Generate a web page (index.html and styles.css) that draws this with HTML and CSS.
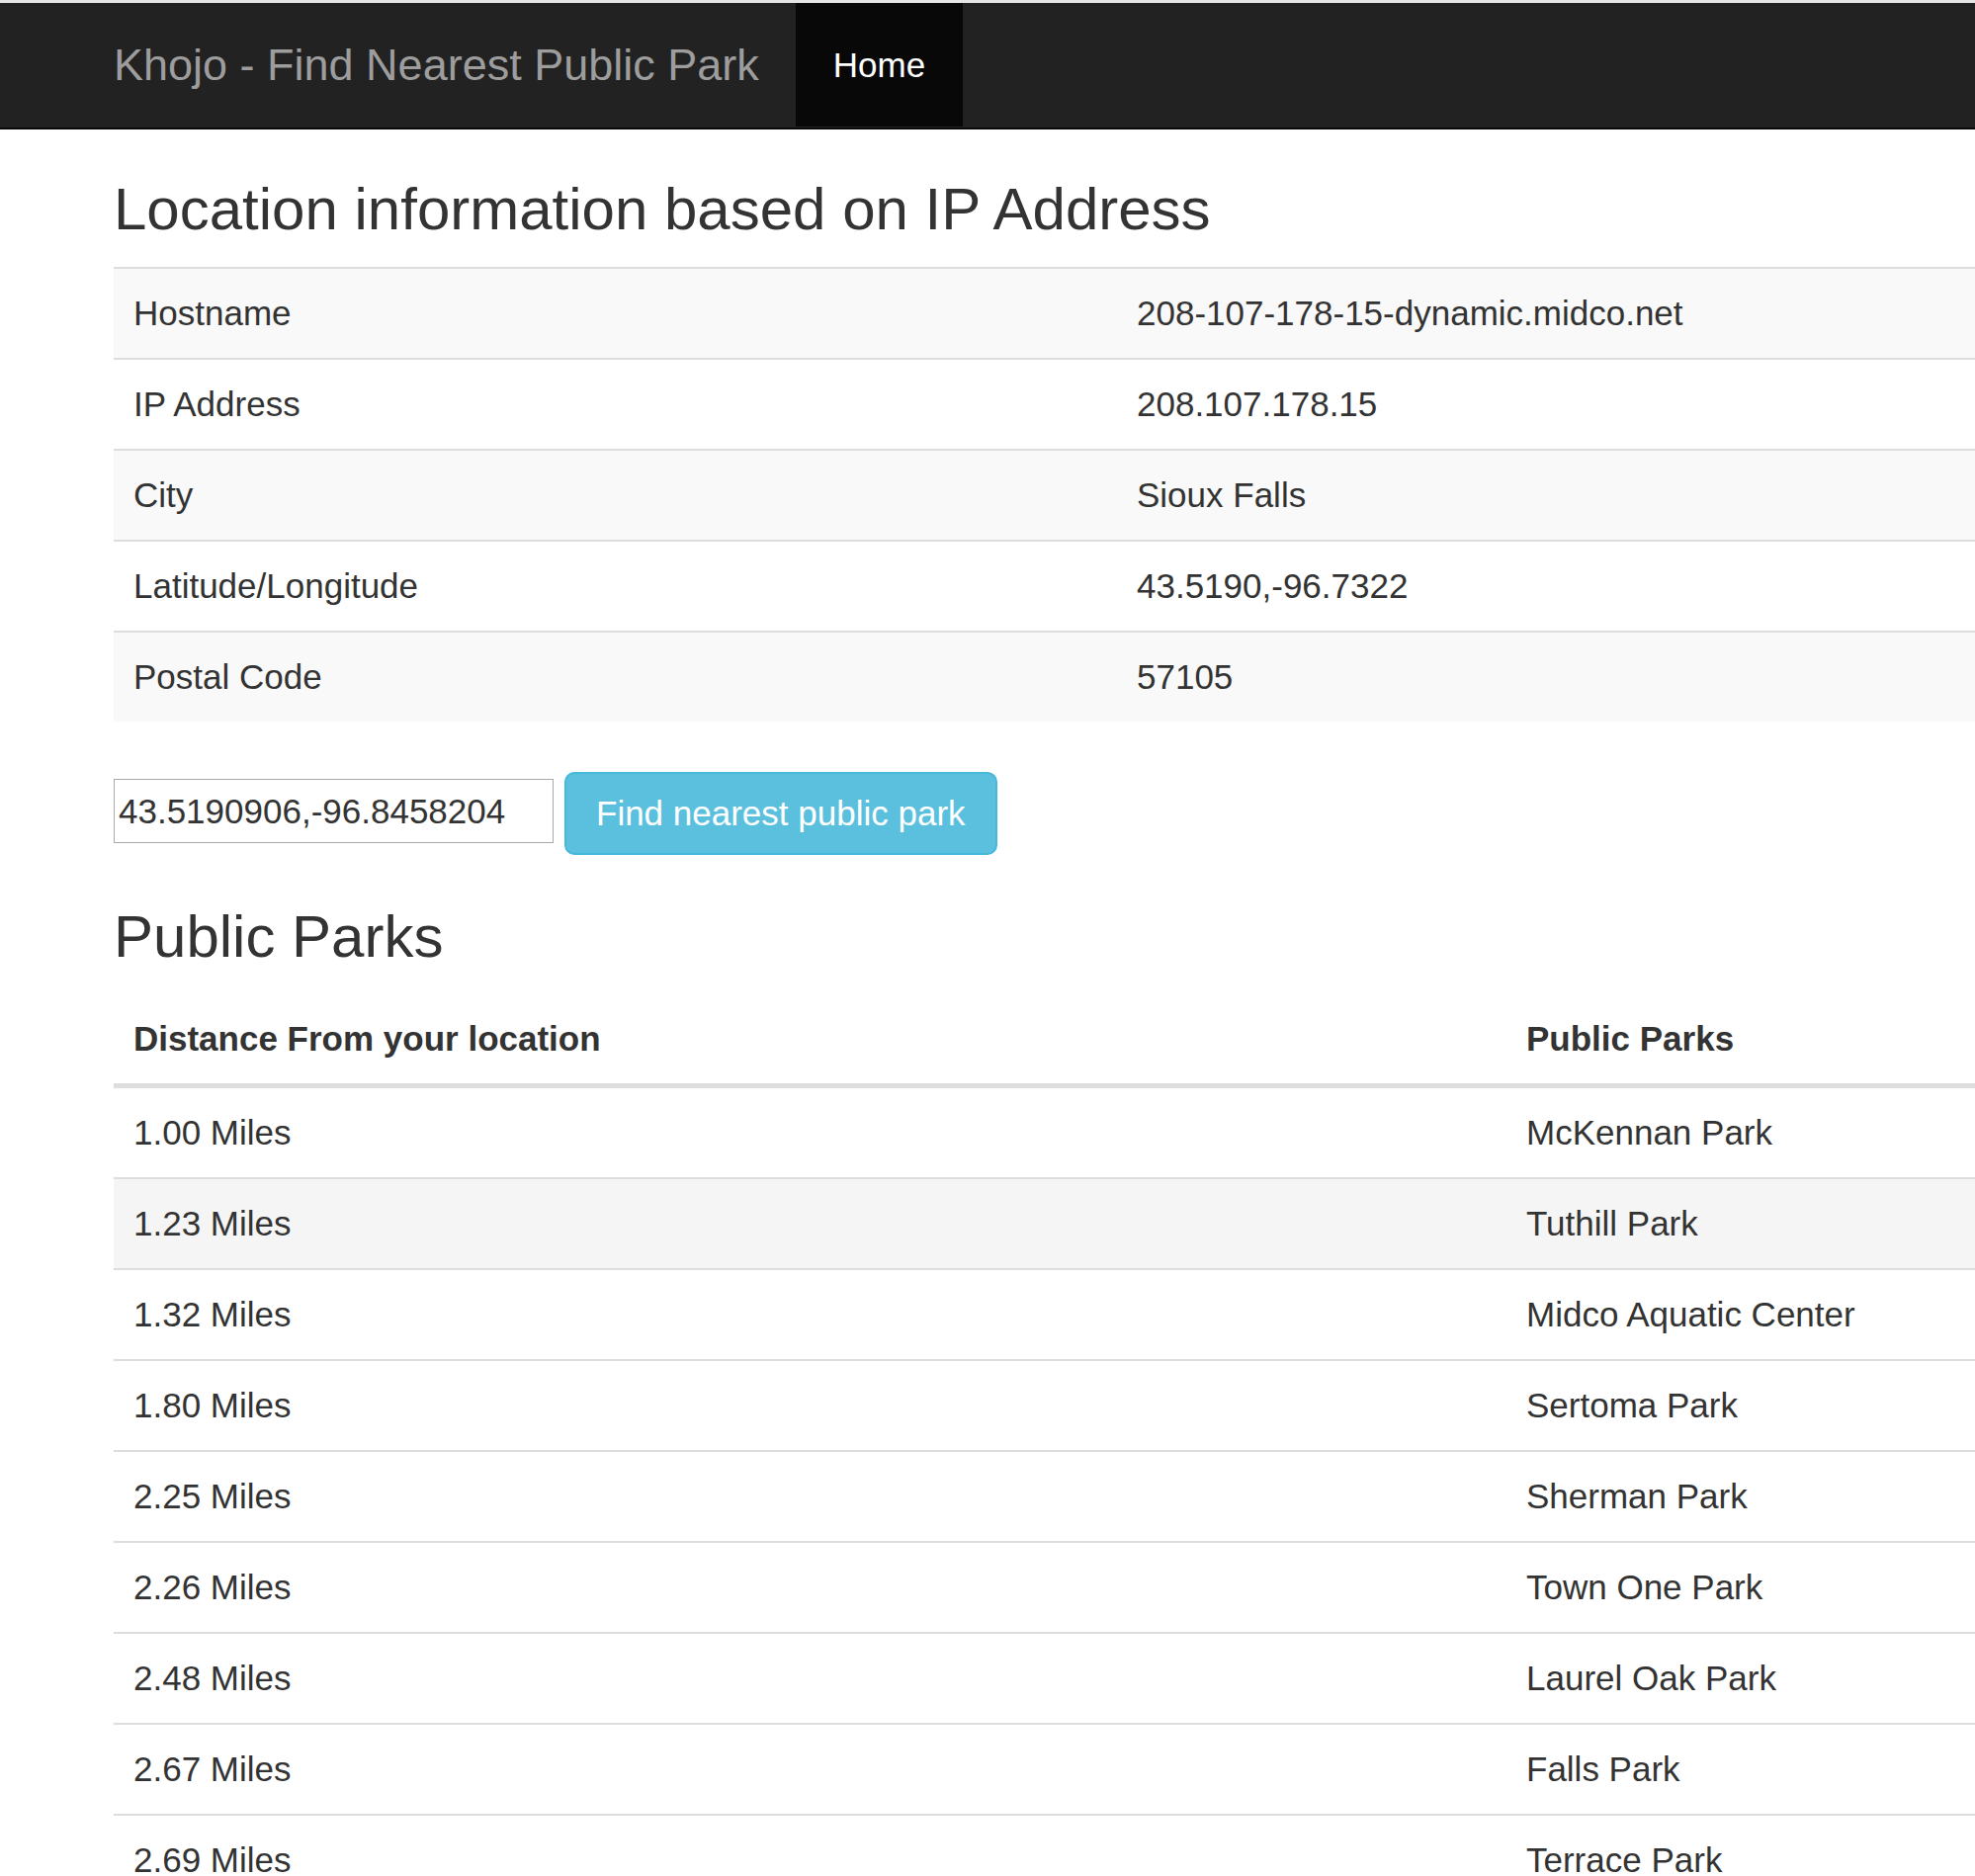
FILE: index.html
```html
<!DOCTYPE html>
<html lang="en">
<head>
<meta charset="utf-8">
<title>Khojo - Find Nearest Public Park</title>
<link rel="stylesheet" href="styles.css">
</head>
<body>
<div class="topstrip"></div>
<nav class="navbar">
  <div class="navbar-inner">
    <a class="brand" href="#">Khojo - Find Nearest Public Park</a>
    <ul class="nav">
      <li class="active"><a href="#">Home</a></li>
    </ul>
  </div>
</nav>
<main class="container">
  <h3 class="heading">Location information based on IP Address</h3>
  <table class="table table-striped info-table">
    <colgroup><col class="info-col1"><col></colgroup>
    <tbody>
      <tr><td>Hostname</td><td>208-107-178-15-dynamic.midco.net</td></tr>
      <tr><td>IP Address</td><td>208.107.178.15</td></tr>
      <tr><td>City</td><td>Sioux Falls</td></tr>
      <tr><td>Latitude/Longitude</td><td>43.5190,-96.7322</td></tr>
      <tr><td>Postal Code</td><td>57105</td></tr>
    </tbody>
  </table>
  <form class="search-form">
    <input class="coord-input" type="text" value="43.5190906,-96.8458204">
    <button class="btn btn-info" type="button">Find nearest public park</button>
  </form>
  <h3 class="heading">Public Parks</h3>
  <table class="table parks-table">
    <colgroup><col class="parks-col1"><col></colgroup>
    <thead>
      <tr><th>Distance From your location</th><th>Public Parks</th></tr>
    </thead>
    <tbody>
      <tr><td>1.00 Miles</td><td>McKennan Park</td></tr>
      <tr class="hover"><td>1.23 Miles</td><td>Tuthill Park</td></tr>
      <tr><td>1.32 Miles</td><td>Midco Aquatic Center</td></tr>
      <tr><td>1.80 Miles</td><td>Sertoma Park</td></tr>
      <tr><td>2.25 Miles</td><td>Sherman Park</td></tr>
      <tr><td>2.26 Miles</td><td>Town One Park</td></tr>
      <tr><td>2.48 Miles</td><td>Laurel Oak Park</td></tr>
      <tr><td>2.67 Miles</td><td>Falls Park</td></tr>
      <tr><td>2.69 Miles</td><td>Terrace Park</td></tr>
    </tbody>
  </table>
</main>
</body>
</html>
```

FILE: styles.css
```css
* { box-sizing: border-box; }
html { overflow: hidden; }
body {
  margin: 0;
  font-family: "Liberation Sans", Arial, Helvetica, sans-serif;
  font-size: 35px;
  line-height: 50px;
  color: #333;
  background: #fff;
}
.topstrip { height: 3px; background: #e6e6e6; }
.navbar {
  background: #222;
  border-bottom: 2.5px solid #080808;
  height: 127.5px;
  margin-bottom: 48px;
}
.navbar-inner {
  display: flex;
  padding-left: 77.5px;
  height: 125px;
}
.brand {
  display: block;
  padding: 37.5px;
  font-size: 45px;
  line-height: 50px;
  height: 125px;
  color: #9d9d9d;
  text-decoration: none;
}
.nav { list-style: none; margin: 0; padding: 0; display: flex; }
.nav li a {
  display: block;
  padding: 37.5px 37.5px;
  height: 125px;
  color: #9d9d9d;
  text-decoration: none;
}
.nav li.active a { background: #080808; color: #fff; }
.container { padding-left: 115px; }
.heading {
  font-size: 60px;
  font-weight: 500;
  line-height: 66px;
  margin: 50px 0 25px;
}
.container > .heading:first-child { margin-top: 0; }
.table {
  width: 100%;
  border-collapse: collapse;
  border-spacing: 0;
  table-layout: fixed;
  margin-bottom: 51px;
}
.info-col1 { width: 1015px; }
.parks-col1 { width: 1409px; }
.table td, .table th {
  padding: 20px;
  line-height: 50px;
  text-align: left;
  vertical-align: top;
  border-top: 2.5px solid #ddd;
}
.table th { font-weight: bold; }
.table thead th { border-top: 0; border-bottom: 5px solid #ddd; vertical-align: bottom; }
.table thead + tbody tr:first-child td { border-top: 0; }
.table-striped tbody tr:nth-of-type(odd) { background: #f9f9f9; }
.parks-table tr.hover { background: #f5f5f5; }
.search-form {
  display: flex;
  align-items: center;
  gap: 11px;
  margin: 0;
}
.coord-input {
  width: 445px;
  height: 65px;
  margin-top: 0;
  padding: 0 4px;
  border: 1px solid #a9a9a9;
  font-family: "Liberation Sans", Arial, sans-serif;
  font-size: 35px;
  color: #333;
  background: #fff;
  position: relative;
  top: -2px;
}
.btn {
  display: inline-block;
  padding: 15px 30px;
  font-family: "Liberation Sans", Arial, sans-serif;
  font-size: 35px;
  line-height: 50px;
  border: 2.5px solid transparent;
  border-radius: 10px;
  cursor: pointer;
}
.btn-info { color: #fff; background: #5bc0de; border-color: #46b8da; }
.search-form + .heading { margin-top: 50px; }
```
